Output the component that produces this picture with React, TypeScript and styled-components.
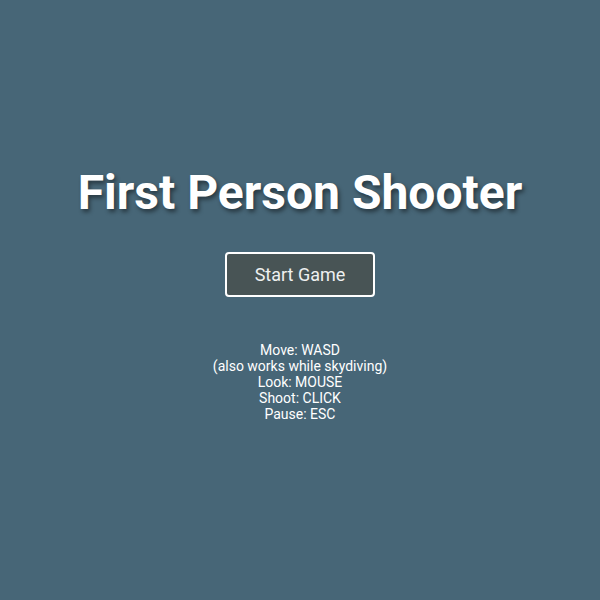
import React from 'react';
import styled, { createGlobalStyle } from 'styled-components';

const GlobalStyle = createGlobalStyle`
  html, body, #root {
    margin: 0;
    height: 100%;
  }
  body {
    background-color: #476677;
    font-family: Roboto, "Liberation Sans", sans-serif;
  }
`;

const controls = [
  'Move: WASD',
  '(also works while skydiving)',
  'Look: MOUSE',
  'Shoot: CLICK',
  'Pause: ESC',
];

export default function App() {
  return (
    <>
      <GlobalStyle />
      <Menu>
        <Title>First Person Shooter</Title>
        <StartButton>Start Game</StartButton>
        <Controls>
          {controls.map((line) => (
            <div key={line}>{line}</div>
          ))}
        </Controls>
      </Menu>
    </>
  );
}

const Menu = styled.div`
  height: 100%;
  box-sizing: border-box;
  padding-bottom: 14px;
  display: flex;
  flex-direction: column;
  align-items: center;
  justify-content: center;
`;

const Title = styled.h1`
  margin: 0;
  font-size: 48px;
  font-weight: 700;
  line-height: 56px;
  color: #fff;
  text-shadow: 2px 3px 4px rgba(0, 0, 0, 0.45);
`;

const StartButton = styled.button`
  margin-top: 31px;
  width: 150px;
  height: 45px;
  box-sizing: border-box;
  border: 2px solid #fff;
  border-radius: 4px;
  background-color: #485455;
  color: #eef0f0;
  font-family: inherit;
  font-size: 18px;
  cursor: pointer;
`;

const Controls = styled.div`
  margin-top: 45px;
  font-size: 14px;
  line-height: 16px;
  color: #fff;
  text-align: center;
`;
